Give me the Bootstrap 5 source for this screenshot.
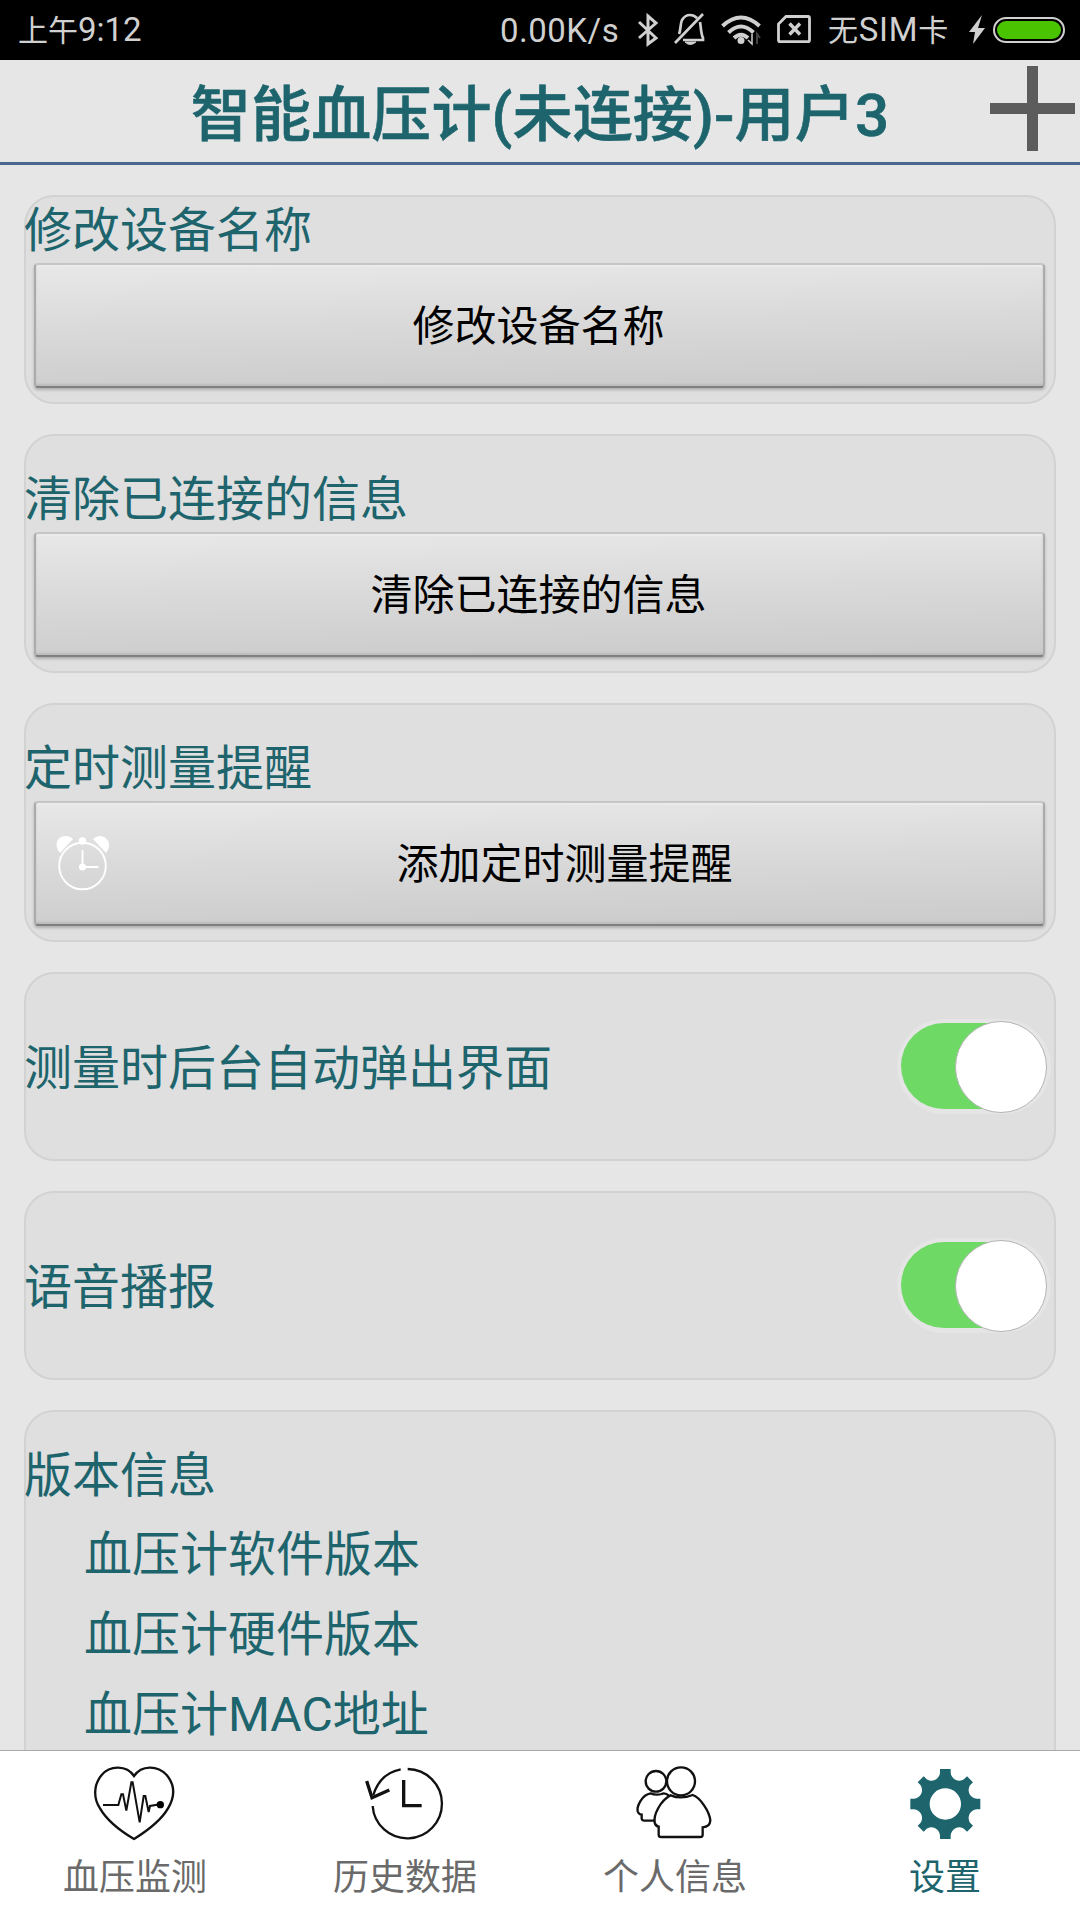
<!DOCTYPE html>
<html lang="zh-CN">
<head>
<meta charset="utf-8">
<meta name="viewport" content="width=device-width, initial-scale=1">
<title>智能血压计</title>
<link href="https://cdn.jsdelivr.net/npm/bootstrap@5.3.0/dist/css/bootstrap.min.css" rel="stylesheet">
<style>
:root { --teal: #1d646d; }
body { font-family: Roboto, "Noto Sans CJK SC", sans-serif; background: #e6e6e6; color: var(--teal); height: 1920px; }
svg { display: block; flex: none; }
.statusbar { height: 60px; background: #000; color: #d0d0d0; font-size: 33px; line-height: 60px; padding-left: 18px; white-space: nowrap; }
.statusbar span { padding-top: 1px; }
.statusbar .han { font-size: 30px; }
.st-time { width: 482px; }
.st-speed { width: 138px; letter-spacing: .5px; }
.st-sim { width: 138px; letter-spacing: .7px; }
.titlebar { height: 105px; border-bottom: 3px solid #496890; }
.titlebar h1 { font-size: 60px; line-height: 104px; padding-top: 4px; letter-spacing: .15px; font-weight: 500; -webkit-text-stroke: .6px var(--teal); }
.plus { position: absolute; right: 4px; top: 5px; }
.settings { padding: 30px 24px 0; gap: 30px; min-height: 0; }
.panel { background: #dfdfdf; border: 2px solid #d2d2d2; border-radius: 30px; flex: none; padding: 36px 7px 14px 0; font-size: 48px; }
.panel-first { padding-top: 6px; }
.panel-switch { height: 189px; padding: 0 3px 0 0; }
.panel-switch .caption { padding-top: 4px; }
.panel-last { height: 400px; }
.caption { line-height: 56px; margin-left: -2px; white-space: nowrap; }
.metal { margin: 4px 2px 0 8px; width: calc(100% - 10px); height: 125px; border: 2px solid #ababab; border-top-color: #c6c6c6; border-bottom-color: #808080; border-radius: 4px; background: linear-gradient(179deg, #e8e8e8, #dadada 45%, #cecece 88%, #cbcbcb); box-shadow: 0 2px 3px rgba(0,0,0,.22), inset 0 2px 1px #ebebeb, inset 0 -2px 2px #bcbcbc; color: #000; font-size: 42px; line-height: 60px; padding: 3px 2px 0 0; }
.metal svg { margin-top: -4px; }
.toggle { width: 154px; height: 95px; border-radius: 48px; background: #e5e5e5; padding: 4px 6px 5px 4px; }
.toggle-fill { height: 86px; border-radius: 43px; background: linear-gradient(90deg, #6fd966 65%, #e5e5e5 65%); }
.knob { width: 92px; height: 92px; border-radius: 50%; background: #fff; border: 1px solid #b4b4b4; margin: 2px -2px 0 0; flex: none; }
.versions { padding-left: 58px; line-height: 80px; margin-top: 11px; }
.tabs { height: 170px; background: #fff; border-top: 1px solid #a9a9a9; color: #6a6a6a; flex: none; }
.tab { padding-top: 14px; font-size: 36px; line-height: 44px; }
.tab svg { margin-bottom: 11px; }
.tab-on { color: var(--teal); }
</style>
</head>
<body class="d-flex flex-column overflow-hidden">
<div class="statusbar d-flex align-items-center flex-shrink-0">
  <span class="st-time"><span class="han">上午</span>9:12</span>
  <span class="st-speed">0.00K/s</span>
  <svg width="36" height="60" viewBox="0 0 36 60" fill="none" stroke="#d0d0d0" stroke-width="3"><path d="M1 22L18 38L10 44V16L18 23L1 38"/></svg>
  <svg width="47" height="60" viewBox="0 0 47 60" fill="none" stroke="#d0d0d0" stroke-width="2.7"><path d="M5 34C7 30 6 24 8 20Q11 15 16 15Q20 15 23 18M26 22C27 28 27 34 29 38V40H9M1 43L29 14"/><path d="M11 42H22Q16 47 11 42Z" fill="#d0d0d0" stroke-width="1"/></svg>
  <svg width="56" height="60" viewBox="0 0 56 60" fill="none" stroke="#d0d0d0" stroke-width="4"><path d="M1.500 26Q20 9 38.500 26M7.500 32.500Q20 20.500 32.500 32.500M13 38Q20 31.500 27 38"/><circle cx="20" cy="40.500" r="3.500" fill="#d0d0d0" stroke="none"/><path d="M31 34V44L27 40" stroke-width="1.500"/><path d="M36 44V34L39 38" stroke="#444" stroke-width="2"/></svg>
  <svg width="51" height="60" viewBox="0 0 51 60" fill="none" stroke="#d0d0d0" stroke-width="2.800"><path d="M9 16.500H31Q32.500 16.500 32.500 18V40Q32.500 41.700 31 41.700H3Q1.500 41.700 1.500 40V24Z"/><path d="M12.500 23.500L23 34.500M23 23.500L12.500 34.500" stroke-width="3.400"/></svg>
  <span class="st-sim"><span class="han">无</span>SIM<span class="han">卡</span></span>
  <svg width="100" height="60" viewBox="0 0 100 60"><path d="M16 15L3 32H9L7 44L19 28H12Z" fill="#d0d0d0"/><rect x="28" y="18" width="70" height="24" rx="12" fill="none" stroke="#d0d0d0" stroke-width="2"/><rect x="31" y="21" width="64" height="18" rx="9" fill="#4ac400"/></svg>
</div>
<header class="titlebar position-relative text-center flex-shrink-0">
  <h1 class="m-0">智能血压计(未连接)-用户3</h1>
  <svg class="plus" width="86" height="87" viewBox="0 0 86 87" fill="#5c5c5c"><path d="M37 1H48V38H85V49H48V86H37V49H0V38H37Z"/></svg>
</header>
<main class="settings d-flex flex-column flex-grow-1 overflow-hidden">
  <section class="panel panel-first">
    <div class="caption">修改设备名称</div>
    <button class="btn metal">修改设备名称</button>
  </section>
  <section class="panel">
    <div class="caption">清除已连接的信息</div>
    <button class="btn metal">清除已连接的信息</button>
  </section>
  <section class="panel">
    <div class="caption">定时测量提醒</div>
    <button class="btn metal d-flex align-items-center">
      <svg class="ms-3" width="60" height="60" viewBox="-4 -3 60 60" fill="none" stroke="#fff" stroke-width="1.900"><circle cx="26.500" cy="30" r="23.300"/><path d="M26.500 14V31H42.500"/><path d="M4 17C-2 10 0 1 9 0Q14 0 17 3ZM50 17C56 10 53 1 44 0Q40 0 37 3Z" fill="#fff" stroke="none"/><circle cx="26.500" cy="5" r="3.700" fill="#fff" stroke="none"/><circle cx="26.500" cy="31" r="3.500" fill="#fff" stroke="none"/></svg>
      <span class="flex-grow-1 pe-4">添加定时测量提醒</span>
    </button>
  </section>
  <section class="panel panel-switch d-flex align-items-center justify-content-between">
    <div class="caption">测量时后台自动弹出界面</div>
    <div class="toggle"><div class="toggle-fill d-flex justify-content-end align-items-center"><div class="knob"></div></div></div>
  </section>
  <section class="panel panel-switch d-flex align-items-center justify-content-between">
    <div class="caption">语音播报</div>
    <div class="toggle"><div class="toggle-fill d-flex justify-content-end align-items-center"><div class="knob"></div></div></div>
  </section>
  <section class="panel panel-last">
    <div class="caption">版本信息</div>
    <div class="versions">
      <div>血压计软件版本</div>
      <div>血压计硬件版本</div>
      <div>血压计MAC地址</div>
    </div>
  </section>
</main>
<nav class="tabs row g-0 text-center">
  <div class="tab col-3 d-flex flex-column align-items-center">
    <svg width="90" height="80" viewBox="90 75 270 240" fill="none" stroke="#111" stroke-width="7"><path d="M222 108C200 75 150 75 125 105C100 135 100 175 120 205C140 240 180 272 222 297C262 272 304 240 324 205C345 170 345 135 320 105C292 75 245 75 222 108Z"/><path d="M129 195H175L184 163H189L199 212L214 127H218L239 247L251 168H256L266 216L270 198L300 193" stroke-width="6"/><circle cx="301" cy="194" r="11" fill="#000" stroke="none"/></svg>
    <span>血压监测</span>
  </div>
  <div class="tab col-3 d-flex flex-column align-items-center">
    <svg width="90" height="80" viewBox="900 75 270 240" fill="none" stroke="#111" stroke-width="7"><path d="M1043 87A104 104 0 1 1 938 198M1022 88Q960 100 940 165"/><path d="M920 123L936 173L988 150M1031 120V197H1085" stroke-width="10"/></svg>
    <span>历史数据</span>
  </div>
  <div class="tab col-3 d-flex flex-column align-items-center">
    <svg width="90" height="80" viewBox="120 75 270 240" fill="none" stroke="#111" stroke-width="7"><circle cx="198" cy="124" r="31"/><circle cx="273" cy="124" r="42"/><path d="M242 166C210 183 190 225 194 248Q197 259 206 260V284Q206 291 214 291H330Q338 291 338 284V262Q360 260 361 241C358 213 330 172 308 165Q273 179 242 166Z"/><path d="M238 168Q224 156 215 162Q198 167 182 160C155 164 140 200 143 214Q147 224 155 224V236Q156 242 163 242H192"/></svg>
    <span>个人信息</span>
  </div>
  <div class="tab tab-on col-3 d-flex flex-column align-items-center">
    <svg width="90" height="80" viewBox="930 75 270 240" fill="currentColor"><path transform="translate(1066 192)" fill-rule="evenodd" d="M-16-105H16V-94A26 26 0 0 0 56-74L65-83L83-65L74-56A26 26 0 0 0 94-16H105V16H94A26 26 0 0 0 74 56L83 65L65 83L56 74A26 26 0 0 0 16 94V105H-16V94A26 26 0 0 0-56 74L-65 83L-83 65L-74 56A26 26 0 0 0-94 16H-105V-16H-94A26 26 0 0 0-74-56L-83-65L-65-83L-56-74A26 26 0 0 0-16-94ZM0-47A47 47 0 1 0 0 47A47 47 0 1 0 0-47Z"/></svg>
    <span>设置</span>
  </div>
</nav>
<script src="https://cdn.jsdelivr.net/npm/bootstrap@5.3.0/dist/js/bootstrap.bundle.min.js"></script>
</body>
</html>
